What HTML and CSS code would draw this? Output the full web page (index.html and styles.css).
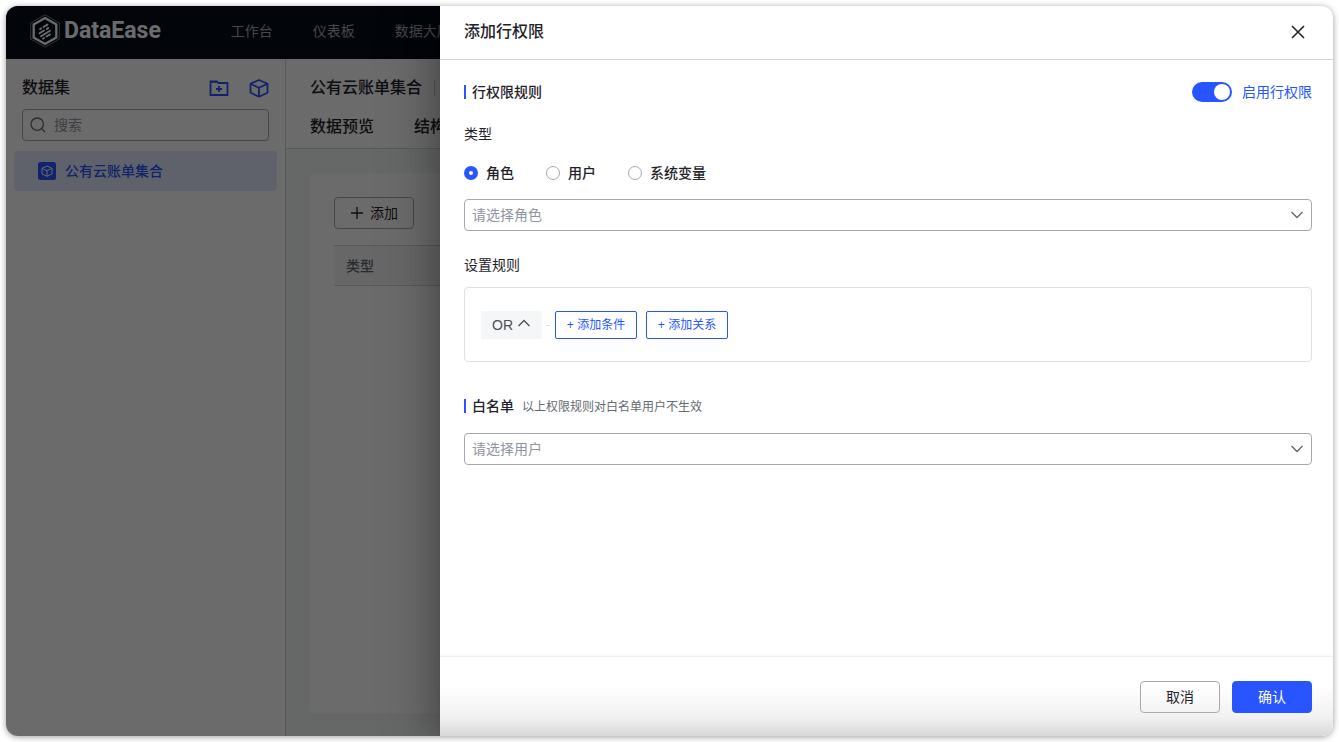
FILE: index.html
```html
<!DOCTYPE html>
<html lang="zh-CN">
<head>
<meta charset="utf-8">
<meta name="viewport" content="width=device-width, initial-scale=1">
<title>DataEase</title>
<link rel="stylesheet" href="styles.css">
</head>
<body>
<div class="window">
  <header class="topbar">
    <a class="brand" href="#">
      <svg class="brand-mark" viewBox="0 0 30 34" aria-hidden="true">
        <path d="M15 .8 29.300 9v16L15 33.200.7 25V9z" fill="none" stroke="#fff" stroke-width=".8" opacity=".55"/>
        <path d="M15 4 26.300 10.500v13L15 30 3.700 23.500v-13z" fill="none" stroke="#fff" stroke-width="2.300"/>
        <path d="M10.200 15l1-.6M13.500 13l4-2.400M9.500 19.200l4.500-2.700M16.800 14.900l1.500-.9M11 22.200l9-5.400M13 24.600l1-.6M16.500 22.500l3.500-2.100" stroke="#fff" stroke-width="1.900" stroke-linecap="round"/>
      </svg>
      <span>DataEase</span>
    </a>
    <nav class="nav">
      <a href="#">工作台</a>
      <a href="#">仪表板</a>
      <a href="#">数据大屏</a>
    </nav>
  </header>
  <div class="workspace">
    <aside class="sidebar">
      <div class="side-head">
        <h2>数据集</h2>
        <button class="icon-btn" type="button" aria-label="新建文件夹">
          <svg width="20" height="20" viewBox="0 0 20 20" fill="none" stroke="currentColor" stroke-width="1.800"><path d="M1.500 17V3.500H8L9.500 5h9v12z"/><path d="M1 3.800h8M10 8v6M7 11h6"/></svg>
        </button>
        <button class="icon-btn" type="button" aria-label="新建数据集">
          <svg width="20" height="20" viewBox="0 0 20 20" fill="none" stroke="currentColor" stroke-width="1.800" stroke-linejoin="round"><path d="M10 2l8.500 3.800v9L10 18.700l-8.500-3.900v-9z"/><path d="M1.500 5.800 10 9.800l8.500-4M10 9.800v9"/></svg>
        </button>
      </div>
      <label class="search">
        <svg width="16" height="16" viewBox="0 0 16 16" fill="none" stroke="#646a73" stroke-width="1.300"><circle cx="7.200" cy="7.200" r="6.200"/><path d="M11.800 11.800 15 15"/></svg>
        <input type="text" placeholder="搜索" aria-label="搜索">
      </label>
      <a class="tree-item" href="#">
        <svg width="18" height="18" viewBox="0 0 18 18" aria-hidden="true"><rect width="18" height="18" rx="2.500" fill="#2855ff"/><path d="M9 4l5 2.300v5.600L9 14.300l-5-2.400V6.300zM4 6.300l5 2.300 5-2.300M9 8.600v5.700" fill="none" stroke="#fff" stroke-linejoin="round"/></svg>
        公有云账单集合
      </a>
    </aside>
    <main class="main">
      <div class="main-head">
        <div class="main-title"><h1>公有云账单集合</h1></div>
        <div class="tabs"><a href="#">数据预览</a><a href="#">结构预览</a></div>
      </div>
      <div class="main-body">
        <section class="card">
          <button class="btn add" type="button">
            <svg width="14" height="14" viewBox="0 0 14 14" stroke="currentColor" stroke-width="1.300"><path d="M7 1v12M1 7h12"/></svg>添加
          </button>
          <table class="table"><thead><tr><th>类型</th></tr></thead></table>
        </section>
      </div>
    </main>
  </div>

  <div class="mask"></div>
  <form class="drawer" role="dialog" aria-labelledby="drawer-title">
    <div class="drawer-head">
      <h2 id="drawer-title">添加行权限</h2>
      <button class="close" type="button" aria-label="关闭">
        <svg width="14" height="14" viewBox="0 0 14 14" stroke="currentColor" stroke-width="1.600"><path d="M1 1l12 12M13 1 1 13"/></svg>
      </button>
    </div>
    <div class="drawer-body">
      <div class="section-head">
        <h3>行权限规则</h3>
        <label class="switch"><input type="checkbox" role="switch" checked>启用行权限</label>
      </div>
      <div class="field-label" id="type-label">类型</div>
      <div class="radios" role="radiogroup" aria-labelledby="type-label">
        <label><input type="radio" name="type" checked>角色</label>
        <label><input type="radio" name="type">用户</label>
        <label><input type="radio" name="type">系统变量</label>
      </div>
      <div class="select">
        <select aria-label="角色"><option>请选择角色</option></select>
        <svg width="14" height="8" viewBox="0 0 14 8" fill="none" stroke="currentColor" stroke-width="1.400"><path d="M1.500 1 7 6.500 12.500 1"/></svg>
      </div>
      <div class="field-label rule-label">设置规则</div>
      <div class="rules">
        <button class="logic" type="button">OR
          <svg width="14" height="12" viewBox="0 0 14 12" fill="none" stroke="currentColor" stroke-width="1.300"><path d="M1.500 7 7 1.500 12.500 7"/></svg>
        </button>
        <span class="link"></span>
        <button class="outline" type="button">+ 添加条件</button>
        <button class="outline" type="button">+ 添加关系</button>
      </div>
      <div class="section-head whitelist">
        <h3>白名单</h3>
        <span class="hint">以上权限规则对白名单用户不生效</span>
      </div>
      <div class="select">
        <select aria-label="用户"><option>请选择用户</option></select>
        <svg width="14" height="8" viewBox="0 0 14 8" fill="none" stroke="currentColor" stroke-width="1.400"><path d="M1.500 1 7 6.500 12.500 1"/></svg>
      </div>
    </div>
    <div class="drawer-foot">
      <button class="btn" type="button">取消</button>
      <button class="btn primary" type="submit">确认</button>
    </div>
  </form>
</div>
</body>
</html>
```
FILE: styles.css
```css
:root {
  --blue: #2855ff;
  --text: #1f2329;
  --muted: #646a73;
  --placeholder: #8f959e;
  --line: #a6a9b0;
}

* { box-sizing: border-box; }

body {
  margin: 0;
  padding: 6px;
  min-height: 100vh;
  display: flex;
  background: #fff;
  color: var(--text);
  font: 14px/22px "Liberation Sans", "Noto Sans CJK SC", sans-serif;
}

h1, h2, h3 { margin: 0; font-weight: 500; }
h1, h2 { font-size: 16px; line-height: 24px; }
h3 { font-size: 14px; line-height: 22px; }
a { color: inherit; text-decoration: none; }
button, input, select { margin: 0; font: inherit; color: inherit; }
button { padding: 0; border: 0; background: transparent; cursor: pointer; }
svg { flex: none; display: block; }

.window {
  position: relative;
  flex: 1;
  display: flex;
  flex-direction: column;
  min-width: 0;
  overflow: hidden;
  border-radius: 12px;
  background: #fff;
  box-shadow: 0 1px 6px rgba(0, 0, 0, .4);
}

.topbar {
  display: flex;
  align-items: center;
  height: 53px;
  padding: 0 24px 4px;
  border-top-right-radius: 24px;
  background: #050e17;
  color: #a6a9ad;
}
.brand {
  display: flex;
  align-items: center;
  gap: 4px;
  color: #fff;
  font: bold 23px/32px Roboto, sans-serif;
}
.brand-mark { width: 30px; height: 34px; }
.nav { display: flex; gap: 40px; margin-left: 70px; }

.workspace { flex: 1; display: flex; }

.sidebar {
  width: 280px;
  flex: none;
  padding: 17px 8px;
  border-right: 1px solid #d0d3d6;
}
.side-head { display: flex; align-items: center; gap: 20px; padding: 0 8px; }
.side-head h2 { flex: 1; }
.icon-btn { color: var(--blue); }
.search {
  display: flex;
  align-items: center;
  gap: 8px;
  height: 32px;
  margin: 9px 8px 10px;
  padding: 0 7px;
  border: 1px solid var(--line);
  border-radius: 4px;
}
.search input { flex: 1; min-width: 0; padding: 0; border: 0; outline: 0; background: transparent; }
.search input::placeholder { color: var(--placeholder); opacity: 1; }
.tree-item {
  display: flex;
  align-items: center;
  gap: 9px;
  height: 40px;
  padding: 0 24px;
  border-radius: 4px;
  background: #e4eaff;
  color: var(--blue);
  font-weight: 500;
}

.main { flex: 1; display: flex; flex-direction: column; min-width: 0; }
.main-head { padding: 17px 24px 9px; border-bottom: 1px solid #d0d3d6; }
.main-title { height: 24px; display: flex; }
.main-title h1 {
  line-height: 16px;
  margin: 4px 0;
  padding-right: 12px;
  border-right: 1px solid #d0d3d6;
}
.tabs { display: flex; gap: 40px; margin-top: 15px; font-size: 16px; line-height: 24px; font-weight: 500; }
.main-body { flex: 1; display: flex; padding: 24px 24px 23px; background: #f3f5f5; }
.card { flex: 1; padding: 24px; border-radius: 4px; background: #fff; }

.btn {
  display: flex;
  align-items: center;
  justify-content: center;
  gap: 6px;
  width: 80px;
  height: 32px;
  border: 1px solid var(--line);
  border-radius: 4px;
}
.btn.primary { border-color: var(--blue); background: var(--blue); color: #fff; }

.table { width: 100%; margin-top: 16px; border-collapse: collapse; }
.table th {
  height: 40px;
  padding: 0 12px;
  border: solid #d0d3d6;
  border-width: 1px 0;
  background: #f5f6f7;
  color: var(--muted);
  text-align: left;
  font-weight: 500;
}

.mask { position: absolute; inset: 0 24px 0 0; background: rgba(0, 0, 0, .58); }

.drawer {
  position: absolute;
  inset: 0 0 0 434px;
  display: flex;
  flex-direction: column;
  background: #fff;
  box-shadow: -12px 0 48px 8px rgba(0, 0, 0, .12), -6px 0 28px rgba(0, 0, 0, .22);
}
.drawer-head {
  display: flex;
  align-items: center;
  justify-content: space-between;
  height: 54px;
  padding: 0 28px 2px 24px;
  border-bottom: 1px solid #d5d6d8;
}
.drawer-body { flex: 1; padding: 21px 21px 21px 24px; }

.section-head { display: flex; align-items: center; gap: 8px; }
.section-head h3 { display: flex; align-items: center; gap: 6px; }
.section-head h3::before { content: ""; width: 2px; height: 14px; background: var(--blue); }
.hint { color: var(--muted); font-size: 12px; line-height: 20px; padding-top: 2px; }

.switch { display: flex; align-items: center; gap: 10px; margin-left: auto; color: var(--blue); }
.switch input {
  appearance: none;
  display: flex;
  justify-content: flex-end;
  width: 40px;
  height: 20px;
  padding: 2px;
  border-radius: 10px;
  background: var(--blue);
}
.switch input::before { content: ""; width: 16px; height: 16px; border-radius: 50%; background: #fff; }
.switch input:not(:checked) { justify-content: flex-start; background: #bbbfc4; }

.field-label { margin-top: 20px; }
.radios { display: flex; gap: 32px; margin: 17px 0 15px; font-weight: 500; }
.radios label { display: flex; align-items: center; gap: 8px; }
.radios input {
  appearance: none;
  width: 14px;
  height: 14px;
  border: 1px solid var(--line);
  border-radius: 50%;
  background: #fff;
}
.radios input:checked { border: 5px solid var(--blue); }

.select { display: grid; align-items: center; }
.select > * { grid-area: 1 / 1; }
.select select {
  appearance: none;
  width: 100%;
  height: 32px;
  padding: 0 32px 0 7px;
  border: 1px solid var(--line);
  border-radius: 4px;
  background: transparent;
  color: var(--placeholder);
}
.select svg { justify-self: end; margin-right: 8px; color: var(--muted); pointer-events: none; }

.rule-label { margin-top: 23px; }
.rules {
  display: flex;
  align-items: center;
  margin-top: 11px;
  padding: 23px 16px 22px;
  border: 1px solid #dee0e3;
  border-radius: 4px;
}
.logic {
  display: flex;
  align-items: center;
  gap: 4px;
  height: 28px;
  padding: 0 11px;
  background: #f5f6f7;
  color: #4c4f55;
}
.link { width: 4px; height: 1px; margin: 0 5px 0 4px; background: #dee0e3; }
.outline {
  min-width: 82px;
  height: 28px;
  padding: 0 10px;
  border: 1px solid var(--blue);
  border-radius: 2px;
  color: var(--blue);
  font-size: 12px;
}
.outline + .outline { margin-left: 9px; }
.whitelist { margin: 33px 0 16px; }

.drawer-foot {
  display: flex;
  justify-content: flex-end;
  gap: 12px;
  padding: 24px 21px 23px;
  border-top: 1px solid #f0f0f1;
  background: linear-gradient(#fff 35%, #f2f2f2 75%, #d8d8d8);
  box-shadow: 0 -1px 3px rgba(0, 0, 0, .04);
}
```
